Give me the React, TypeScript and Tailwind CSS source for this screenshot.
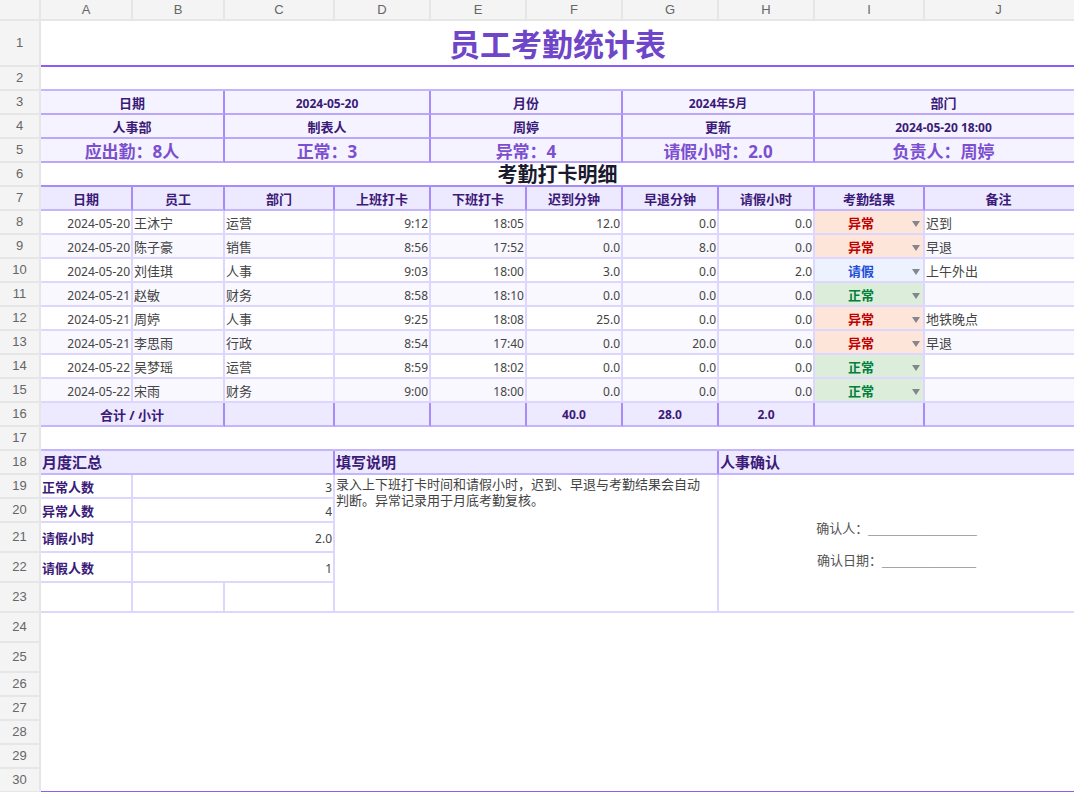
import type { ReactNode } from 'react';

const COLUMNS = ['A', 'B', 'C', 'D', 'E', 'F', 'G', 'H', 'I', 'J'];

const ROWS = [
  { date: '2024-05-20', name: '王沐宁', dept: '运营', on: '9:12', off: '18:05', late: '12.0', early: '0.0', leave: '0.0', status: '异常', note: '迟到' },
  { date: '2024-05-20', name: '陈子豪', dept: '销售', on: '8:56', off: '17:52', late: '0.0', early: '8.0', leave: '0.0', status: '异常', note: '早退' },
  { date: '2024-05-20', name: '刘佳琪', dept: '人事', on: '9:03', off: '18:00', late: '3.0', early: '0.0', leave: '2.0', status: '请假', note: '上午外出' },
  { date: '2024-05-21', name: '赵敏', dept: '财务', on: '8:58', off: '18:10', late: '0.0', early: '0.0', leave: '0.0', status: '正常', note: '' },
  { date: '2024-05-21', name: '周婷', dept: '人事', on: '9:25', off: '18:08', late: '25.0', early: '0.0', leave: '0.0', status: '异常', note: '地铁晚点' },
  { date: '2024-05-21', name: '李思雨', dept: '行政', on: '8:54', off: '17:40', late: '0.0', early: '20.0', leave: '0.0', status: '异常', note: '早退' },
  { date: '2024-05-22', name: '吴梦瑶', dept: '运营', on: '8:59', off: '18:02', late: '0.0', early: '0.0', leave: '0.0', status: '正常', note: '' },
  { date: '2024-05-22', name: '宋雨', dept: '财务', on: '9:00', off: '18:00', late: '0.0', early: '0.0', leave: '0.0', status: '正常', note: '' },
];

const STATUS_STYLE: Record<string, string> = {
  异常: 'bg-[#fde5d9] text-[#c00000]',
  请假: 'bg-[#edf2ff] text-[#1d4ed8]',
  正常: 'bg-[#dcedd9] text-[#00803c]',
};

const FONT = "font-['Noto_Sans','Noto_Sans_CJK_SC',sans-serif]";

function Cell({ className = '', children }: { className?: string; children?: ReactNode }) {
  return <div className={`flex items-center min-w-0 whitespace-nowrap leading-none ${className}`}>{children}</div>;
}

// Row number on the left, spreadsheet chrome
function RowNo({ n }: { n: number }) {
  return (
    <div className="flex items-center justify-center bg-[#f4f4f4] border-r-2 border-b-2 border-[#e6e6e6] font-['Liberation_Sans',sans-serif] text-[13px] text-[#666]">
      {n}
    </div>
  );
}

const META = 'col-span-2 justify-center bg-[#f5f3ff] border-r-2 border-b-2 border-r-[#a78bfa] border-b-[#bba6fc] font-bold';
const HEAD = 'justify-center pt-[2px] bg-[#ede9fe] border-r-2 border-b-2 border-r-[#a78bfa] border-b-[#c4b5fd] text-[13px] font-bold text-[#3b1a78]';
const TOTAL = 'justify-center pt-[2px] bg-[#ede9fe] border-r-2 border-b-2 border-r-[#a78bfa] border-b-[#c4b5fd] text-[12px] font-bold text-[#3b1a78]';
const SECTION = 'pl-[1px] pt-[1px] bg-[#ede9fe] border-r-2 border-b-2 border-r-[#a78bfa] border-b-[#c4b5fd] text-[15px] font-bold text-[#3b1a78]';
const BODY = 'border-r-2 border-b-2 border-[#ddd6fe] text-[#444]';
const SUMMARY_LABEL = 'pl-[1px] pt-[2px] border-r-2 border-b-2 border-[#ddd6fe] text-[13px] font-bold text-[#3b1a78]';
const SUMMARY_VALUE = `col-span-2 ${BODY} justify-end pr-[1px] pt-[4px] text-[12px]`;

// Dates and numbers in the meta block run a size smaller than the labels
function MetaRow({ cells }: { cells: string[] }) {
  return (
    <>
      {cells.map((c, i) => (
        <Cell key={c} className={`${META} ${/\d/.test(c) ? 'pt-[4px] text-[12px]' : 'pt-[2px] text-[13px]'} ${i === 4 ? 'pr-[2px]' : ''} text-[#3b1a78]`}>
          {c}
        </Cell>
      ))}
    </>
  );
}

function StatCell({ label, last }: { label: string; last?: boolean }) {
  return <Cell className={`${META} pt-[2px] ${last ? 'pr-[2px]' : ''} text-[17px] text-[#7c4fd0]`}>{label}</Cell>;
}

export default function App() {
  return (
    <div className={`w-[1074px] h-[792px] overflow-hidden bg-white ${FONT}`}>
      <div className="grid w-[1076px] h-[793px] grid-cols-[41px_92px_92px_110px_96px_96px_96px_96px_96px_110px_151px] grid-rows-[21px_46px_24px_24px_24px_24px_24px_24px_repeat(8,24px)_24px_24px_24px_24px_24px_30px_30px_30px_30px_30px_24px_24px_24px_24px_24px]">
        {/* Column letters */}
        <div className="bg-[#f4f4f4] border-r-2 border-b-2 border-[#e6e6e6]" />
        {COLUMNS.map((c) => (
          <div
            key={c}
            className={`flex items-center justify-center bg-[#f4f4f4] border-r-2 border-b-2 border-[#e6e6e6] font-['Liberation_Sans',sans-serif] text-[13px] text-[#666] ${c === 'J' ? 'pr-[2px]' : ''}`}
          >
            {c}
          </div>
        ))}

        <RowNo n={1} />
        <Cell className="col-span-10 justify-center pt-[2px] pr-[2px] border-b-2 border-b-[#8b5cf6] text-[31px] font-bold text-[#6f45c9]">员工考勤统计表</Cell>

        <RowNo n={2} />
        <Cell className="col-span-10 border-b-2 border-b-[#c4b5fd]" />

        <RowNo n={3} />
        <MetaRow cells={['日期', '2024-05-20', '月份', '2024年5月', '部门']} />

        <RowNo n={4} />
        <MetaRow cells={['人事部', '制表人', '周婷', '更新', '2024-05-20 18:00']} />

        <RowNo n={5} />
        <StatCell label="应出勤：8人" />
        <StatCell label="正常：3" />
        <StatCell label="异常：4" />
        <StatCell label="请假小时：2.0" />
        <StatCell label="负责人：周婷" last />

        <RowNo n={6} />
        <Cell className="col-span-10 justify-center pt-[1px] pr-[2px] border-b-2 border-b-[#a78bfa] text-[20px] font-bold text-[#1a1a2e]">考勤打卡明细</Cell>

        <RowNo n={7} />
        {['日期', '员工', '部门', '上班打卡', '下班打卡', '迟到分钟', '早退分钟', '请假小时', '考勤结果', '备注'].map((h) => (
          <Cell key={h} className={`${HEAD} ${h === '备注' ? 'pr-[2px]' : ''}`}>
            {h}
          </Cell>
        ))}

        {ROWS.map((r, i) => {
          const bg = i % 2 === 1 ? 'bg-[#faf8ff]' : 'bg-white';
          const num = `${BODY} ${bg} justify-end pr-[1px] pt-[4px] text-[12px]`;
          const txt = `${BODY} ${bg} pl-[1px] pt-[2px] text-[13px]`;
          return [
            <RowNo key={`n${i}`} n={i + 8} />,
            <Cell key={`a${i}`} className={num}>{r.date}</Cell>,
            <Cell key={`b${i}`} className={txt}>{r.name}</Cell>,
            <Cell key={`c${i}`} className={txt}>{r.dept}</Cell>,
            <Cell key={`d${i}`} className={num}>{r.on}</Cell>,
            <Cell key={`e${i}`} className={num}>{r.off}</Cell>,
            <Cell key={`f${i}`} className={num}>{r.late}</Cell>,
            <Cell key={`g${i}`} className={num}>{r.early}</Cell>,
            <Cell key={`h${i}`} className={num}>{r.leave}</Cell>,
            <Cell key={`i${i}`} className={`relative justify-center pr-4 pt-[2px] border-r-2 border-b-2 border-[#ddd6fe] text-[13px] font-bold ${STATUS_STYLE[r.status]}`}>
              {r.status}
              <svg className="absolute right-[3px] top-[10px]" width="8" height="6" viewBox="0 0 8 6">
                <polygon points="0,0 8,0 4,6" fill="#85858d" />
              </svg>
            </Cell>,
            <Cell key={`j${i}`} className={txt}>{r.note}</Cell>,
          ];
        })}

        <RowNo n={16} />
        <Cell className={`col-span-2 ${HEAD}`}>合计 / 小计</Cell>
        <Cell className={TOTAL} />
        <Cell className={TOTAL} />
        <Cell className={TOTAL} />
        <Cell className={TOTAL}>40.0</Cell>
        <Cell className={TOTAL}>28.0</Cell>
        <Cell className={TOTAL}>2.0</Cell>
        <Cell className={TOTAL} />
        <Cell className={TOTAL} />

        <RowNo n={17} />
        <Cell className="col-span-10 border-b-2 border-b-[#c4b5fd]" />

        <RowNo n={18} />
        <Cell className={`col-span-3 ${SECTION}`}>月度汇总</Cell>
        <Cell className={`col-span-4 ${SECTION}`}>填写说明</Cell>
        <Cell className={`col-span-3 ${SECTION}`}>人事确认</Cell>

        <RowNo n={19} />
        <Cell className={SUMMARY_LABEL}>正常人数</Cell>
        <Cell className={SUMMARY_VALUE}>3</Cell>
        <div className={`col-span-4 row-span-5 ${BODY} pl-[1px] pr-2 pt-[1px] text-[13px] leading-4`}>
          录入上下班打卡时间和请假小时，迟到、早退与考勤结果会自动判断。异常记录用于月底考勤复核。
        </div>
        <div className="col-span-3 row-span-5 flex flex-col items-center justify-center gap-[13px] pt-[3px] border-r-2 border-b-2 border-[#ddd6fe] text-[13px] leading-[19px] text-[#555]">
          <div>确认人：<span className="font-['Liberation_Sans',sans-serif] text-[#999]">_______________</span></div>
          <div>确认日期：<span className="font-['Liberation_Sans',sans-serif] text-[#999]">_____________</span></div>
        </div>

        <RowNo n={20} />
        <Cell className={SUMMARY_LABEL}>异常人数</Cell>
        <Cell className={SUMMARY_VALUE}>4</Cell>

        <RowNo n={21} />
        <Cell className={SUMMARY_LABEL}>请假小时</Cell>
        <Cell className={SUMMARY_VALUE}>2.0</Cell>

        <RowNo n={22} />
        <Cell className={SUMMARY_LABEL}>请假人数</Cell>
        <Cell className={SUMMARY_VALUE}>1</Cell>

        <RowNo n={23} />
        <Cell className={BODY} />
        <Cell className={BODY} />
        <Cell className={BODY} />

        <RowNo n={24} />
        <div className="col-span-10 row-span-7 border-b-2 border-b-[#8b5cf6]" />
        <RowNo n={25} />
        <RowNo n={26} />
        <RowNo n={27} />
        <RowNo n={28} />
        <RowNo n={29} />
        <RowNo n={30} />
      </div>
    </div>
  );
}
